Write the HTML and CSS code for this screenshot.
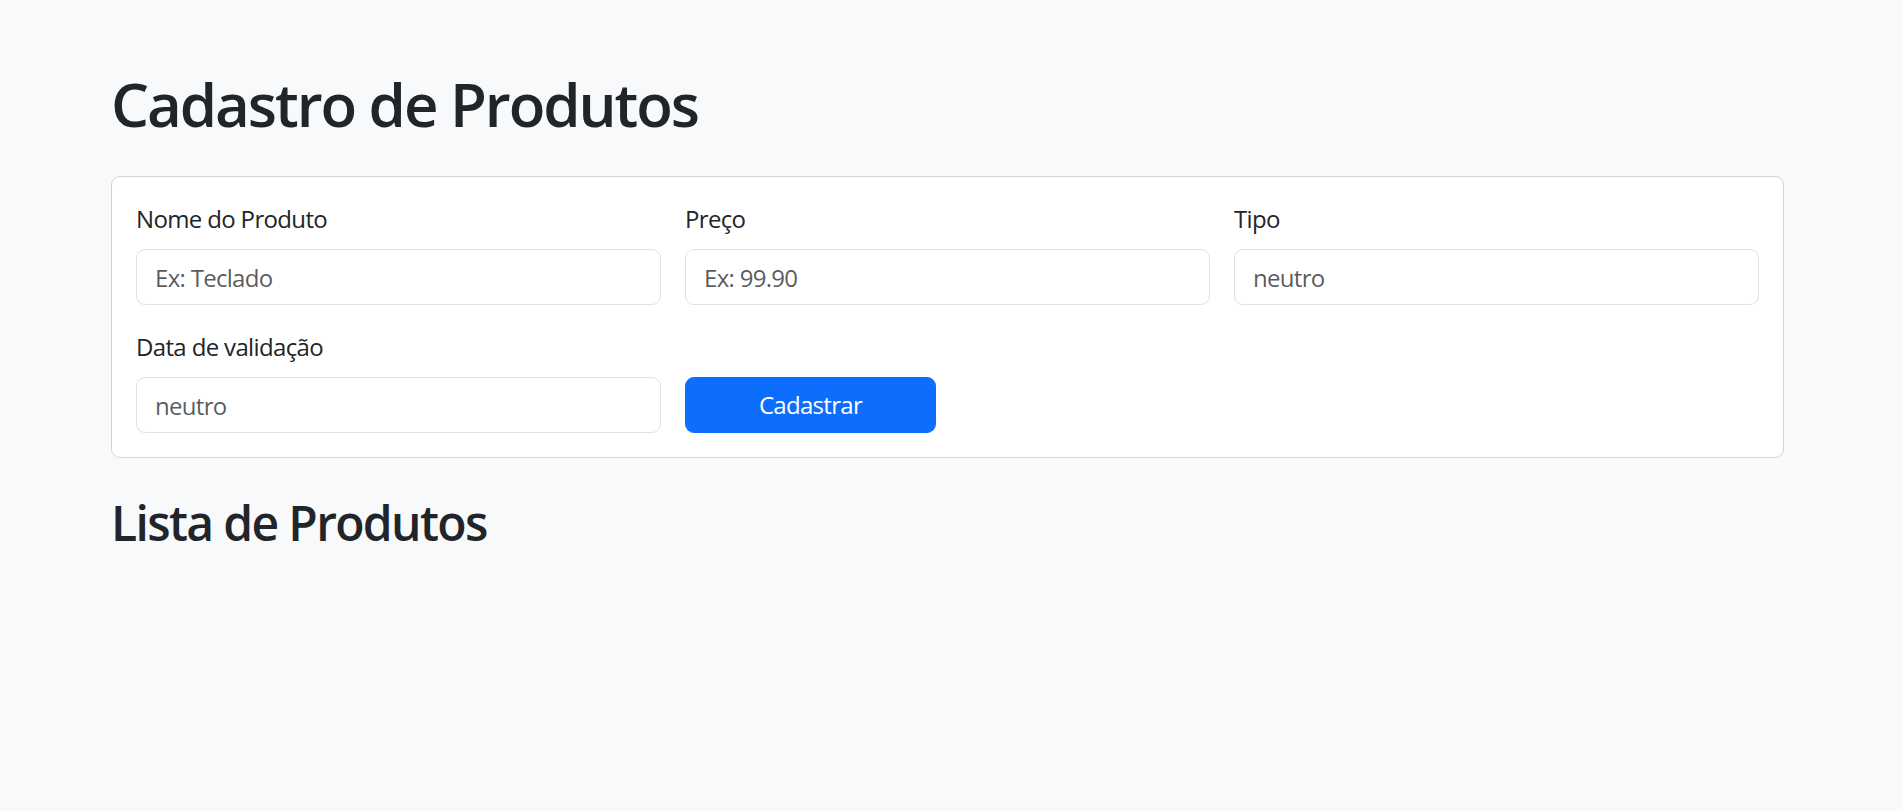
FILE: index.html
```html
<!DOCTYPE html>
<html lang="pt-BR">
<head>
<meta charset="utf-8">
<title>Cadastro de Produtos</title>
<link rel="stylesheet" href="styles.css">
</head>
<body>
<main class="container">
  <h1 class="page-title">Cadastro de Produtos</h1>
  <section class="card">
    <form class="form-grid">
      <div class="field">
        <label class="form-label" for="nome">Nome do Produto</label>
        <input class="form-control" id="nome" type="text" placeholder="Ex: Teclado">
      </div>
      <div class="field">
        <label class="form-label" for="preco">Preço</label>
        <input class="form-control" id="preco" type="text" placeholder="Ex: 99.90">
      </div>
      <div class="field">
        <label class="form-label" for="tipo">Tipo</label>
        <input class="form-control" id="tipo" type="text" placeholder="neutro">
      </div>
      <div class="field">
        <label class="form-label" for="data">Data de validação</label>
        <input class="form-control" id="data" type="text" placeholder="neutro">
      </div>
      <div class="field field-action">
        <button class="btn-primary" type="button">Cadastrar</button>
      </div>
    </form>
  </section>
  <h2 class="section-title">Lista de Produtos</h2>
  <div class="product-list"></div>
</main>
</body>
</html>
```

FILE: styles.css
```css
* { box-sizing: border-box; }

html, body {
  margin: 0;
  padding: 0;
}

body {
  background: #f8f9fa;
  color: #212529;
  font-family: "Open Sans", "Noto Sans", sans-serif;
  font-size: 24px;
  line-height: 1.5;
  min-height: 811px;
}

.container {
  width: 1673px;
  margin-left: 111px;
  padding-top: 68px;
}

.page-title {
  margin: 0 0 36px 0;
  font-size: 60px;
  line-height: 72px;
  font-weight: 600;
  letter-spacing: -2.05px;
}

.card {
  background: #fff;
  border: 1px solid #d3d4d5;
  border-radius: 9px;
  padding: 24px;
}

.form-grid {
  display: grid;
  grid-template-columns: repeat(3, 1fr);
  column-gap: 24px;
  row-gap: 24px;
  margin: 0;
}

.field {
  display: flex;
  flex-direction: column;
}

.field-action {
  justify-content: flex-end;
}

.form-label {
  display: block;
  margin-bottom: 12px;
  font-size: 24px;
  line-height: 36px;
  letter-spacing: -0.65px;
}

.form-control {
  display: block;
  width: 100%;
  height: 56px;
  padding: 9px 18px;
  font-family: inherit;
  font-size: 24px;
  line-height: 36px;
  color: #212529;
  background: #fff;
  border: 1px solid #dee2e6;
  border-radius: 9px;
  outline: none;
  letter-spacing: -0.7px;
}

.form-control::placeholder {
  color: rgba(33, 37, 41, 0.75);
  opacity: 1;
}

.btn-primary {
  width: 251px;
  height: 56px;
  padding: 9px 18px;
  font-family: inherit;
  font-size: 24px;
  line-height: 36px;
  color: #fff;
  background: #0d6efd;
  border: 1px solid #0d6efd;
  border-radius: 9px;
  cursor: pointer;
  letter-spacing: -0.7px;
}

.section-title {
  margin: 36px 0 0 0;
  font-size: 48px;
  line-height: 57.6px;
  font-weight: 600;
  letter-spacing: -1.65px;
}
```
